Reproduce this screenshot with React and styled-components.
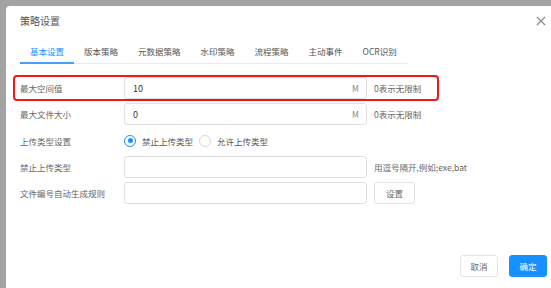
import React from "react";
import styled, { createGlobalStyle } from "styled-components";

const GlobalStyle = createGlobalStyle`
  html, body {
    margin: 0;
    padding: 0;
    height: 100%;
    overflow: hidden;
    background: #a3a3a3;
    font-family: "Noto Sans CJK SC", "Liberation Sans", sans-serif;
  }
  #root {
    height: 100%;
  }
`;

const Modal = styled.div`
  display: flex;
  flex-direction: column;
  box-sizing: border-box;
  margin: 6px 0 0 6px;
  width: calc(100% - 6px);
  height: calc(100% - 6px);
  background: #fff;
  border-radius: 4px 0 0 0;
`;

const Header = styled.div`
  display: flex;
  align-items: center;
  justify-content: space-between;
  height: 30px;
  padding: 0 5px 0 14px;
`;

const Title = styled.div`
  font-size: 10px;
  line-height: 12px;
  color: #555;
`;

const Close = styled.button`
  display: flex;
  padding: 0;
  border: none;
  background: none;
  cursor: pointer;
`;

const Tabs = styled.div`
  display: flex;
  width: 388px;
  margin: 5px 0 0 14px;
  border-bottom: 1px solid #ebebeb;
`;

const Tab = styled.div`
  padding: 0 10px;
  height: 21px;
  line-height: 21px;
  font-size: 8.5px;
  color: ${(p) => (p.active ? "#1890ff" : "#555")};
  border-bottom: 2px solid ${(p) => (p.active ? "#4a9ff5" : "transparent")};
  margin-bottom: -1px;
  white-space: nowrap;
  cursor: pointer;
`;

const Form = styled.div`
  display: flex;
  flex-direction: column;
  gap: 4.25px;
  margin: 13px 0 0 9px;
`;

const Row = styled.div`
  display: grid;
  grid-template-columns: 97px 243px max-content;
  column-gap: 7px;
  align-items: center;
  box-sizing: border-box;
  width: 422px;
  height: 22px;
  padding-left: 5px;
  border-radius: 2px;
  outline: ${(p) => (p.highlight ? "2px solid #f01818" : "none")};
`;

const Label = styled.div`
  font-size: 8.5px;
  color: #666;
  white-space: nowrap;
`;

const InputBox = styled.div`
  display: flex;
  align-items: center;
  justify-content: space-between;
  box-sizing: border-box;
  height: 22px;
  padding: 0 7px 0 8px;
  border: 1px solid #e0e0e0;
  border-radius: 3px;
  font-size: 9px;
  color: #333;
`;

const Suffix = styled.span`
  color: #888;
  font-size: 8.5px;
`;

const Hint = styled.div`
  font-size: 8.5px;
  color: #666;
  white-space: nowrap;
`;

const RadioGroup = styled.div`
  display: flex;
  align-items: center;
  gap: 6px;
  white-space: nowrap;
`;

const RadioCircle = styled.span`
  display: flex;
  align-items: center;
  justify-content: center;
  box-sizing: border-box;
  width: 12px;
  height: 12px;
  border-radius: 50%;
  border: 1px solid ${(p) => (p.checked ? "#1890ff" : "#d6d6d6")};
  &::after {
    content: "";
    width: 5px;
    height: 5px;
    border-radius: 50%;
    background: ${(p) => (p.checked ? "#1890ff" : "transparent")};
  }
`;

const RadioText = styled.span`
  font-size: 8.5px;
  color: #555;
`;

const Button = styled.button`
  box-sizing: border-box;
  width: ${(p) => p.w || 38}px;
  height: 22px;
  padding: 0;
  border-radius: 3px;
  font-family: inherit;
  font-size: 8.5px;
  border: 1px solid ${(p) => (p.primary ? "#1890ff" : "#e2e2e2")};
  background: ${(p) => (p.primary ? "#1890ff" : "#fff")};
  color: ${(p) => (p.primary ? "#fff" : "#666")};
  cursor: pointer;
`;

const Footer = styled.div`
  display: flex;
  justify-content: flex-end;
  gap: 11px;
  margin-top: auto;
  padding: 0 4px 11px 0;
`;

const tabs = ["基本设置", "版本策略", "元数据策略", "水印策略", "流程策略", "主动事件", "OCR识别"];

export default function App() {
  return (
    <>
      <GlobalStyle />
      <Modal>
        <Header>
          <Title>策略设置</Title>
          <Close>
            <svg width="10" height="10" viewBox="0 0 10 10">
              <path d="M1 1 L9 9 M9 1 L1 9" stroke="#8a8a8a" strokeWidth="1.2" />
            </svg>
          </Close>
        </Header>
        <Tabs>
          {tabs.map((t, i) => (
            <Tab key={t} active={i === 0}>{t}</Tab>
          ))}
        </Tabs>
        <Form>
          <Row highlight>
            <Label>最大空间值</Label>
            <InputBox>
              <span>10</span>
              <Suffix>M</Suffix>
            </InputBox>
            <Hint>0表示无限制</Hint>
          </Row>
          <Row>
            <Label>最大文件大小</Label>
            <InputBox>
              <span>0</span>
              <Suffix>M</Suffix>
            </InputBox>
            <Hint>0表示无限制</Hint>
          </Row>
          <Row>
            <Label>上传类型设置</Label>
            <RadioGroup>
              <RadioCircle checked />
              <RadioText>禁止上传类型</RadioText>
              <RadioCircle />
              <RadioText>允许上传类型</RadioText>
            </RadioGroup>
          </Row>
          <Row>
            <Label>禁止上传类型</Label>
            <InputBox />
            <Hint>用逗号隔开,例如;exe,bat</Hint>
          </Row>
          <Row>
            <Label>文件编号自动生成规则</Label>
            <InputBox />
            <Button w={41}>设置</Button>
          </Row>
        </Form>
        <Footer>
          <Button>取消</Button>
          <Button primary>确定</Button>
        </Footer>
      </Modal>
    </>
  );
}
